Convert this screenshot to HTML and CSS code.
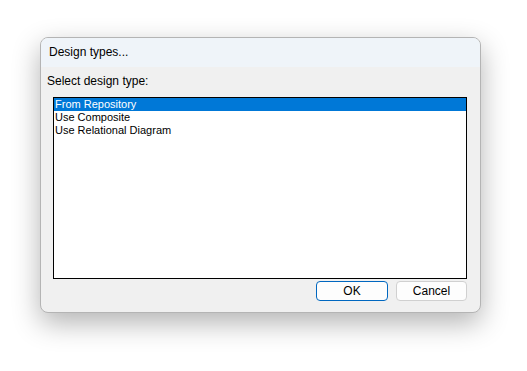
FILE: index.html
```html
<!DOCTYPE html>
<html>
<head>
<meta charset="utf-8">
<link rel="stylesheet" href="styles.css">
</head>
<body>
<div class="window">
  <div class="titlebar">Design types...</div>
  <div class="content">
    <div class="label">Select design type:</div>
    <div class="listbox">
      <div class="item selected">From Repository</div>
      <div class="item">Use Composite</div>
      <div class="item">Use Relational Diagram</div>
    </div>
    <div class="buttons">
      <button class="btn default">OK</button>
      <button class="btn">Cancel</button>
    </div>
  </div>
</div>
</body>
</html>
```
FILE: styles.css
```css
html, body {
  margin: 0;
  padding: 0;
  background: #ffffff;
}
body {
  width: 527px;
  height: 371px;
  padding: 37px 0 0 40px;
  box-sizing: border-box;
  font-family: "Liberation Sans", Arial, sans-serif;
  font-size: 12px;
  color: #000;
}
.window {
  width: 441px;
  height: 276px;
  box-sizing: border-box;
  border: 1px solid #b4b4b4;
  border-radius: 8px;
  background: #f0f0f0;
  overflow: hidden;
  box-shadow: 0 10px 28px rgba(0, 0, 0, 0.3);
  display: flex;
  flex-direction: column;
}
.titlebar {
  height: 29px;
  background: #eff4f9;
  padding-left: 8px;
  line-height: 28px;
  font-size: 12px;
  flex: none;
}
.content {
  flex: 1;
  display: flex;
  flex-direction: column;
  padding: 6px 13px 9px 6px;
}
.label {
  line-height: 16px;
  height: 16px;
  margin-bottom: 8px;
}
.listbox {
  margin-left: 6px;
  height: 182px;
  box-sizing: border-box;
  border: 1px solid #000;
  background: #fff;
  padding: 0;
  flex: none;
}
.item {
  height: 13px;
  line-height: 13px;
  padding-left: 1px;
  font-size: 11px;
}
.item.selected {
  background: #0078d7;
  color: #fff;
}
.buttons {
  display: flex;
  justify-content: flex-end;
  gap: 8px;
  margin-top: 2px;
}
.btn {
  font-family: "Liberation Sans", Arial, sans-serif;
  font-size: 12px;
  width: 71px;
  height: 20px;
  padding: 0;
  border-radius: 4px;
  border: 1px solid #d0d0d0;
  background: #fdfdfd;
  color: #000;
  line-height: 16px;
}
.btn.default {
  border: 1px solid #0067c0;
  width: 72px;
}
```
